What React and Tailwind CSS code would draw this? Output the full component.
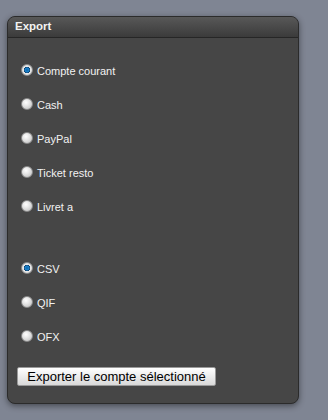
const accounts = ['Compte courant', 'Cash', 'PayPal', 'Ticket resto', 'Livret a']
const formats = ['CSV', 'QIF', 'OFX']

const Radio = ({ checked }) => (
  <span
    className={`block w-[12px] h-[12px] rounded-full shrink-0 border border-[#8a8a8a] ${
      checked
        ? 'bg-[radial-gradient(circle_at_50%_50%,#0b62a8_0%,#1c86cf_28%,#0e3f6c_42%,#e8e8e8_50%,#c9c9c9_100%)]'
        : 'bg-[radial-gradient(circle_at_40%_35%,#ffffff_0%,#e6e6e6_40%,#b8b8b8_100%)]'
    }`}
  />
)

const Option = ({ label, checked }) => (
  <label className="flex items-start h-[34px]">
    <Radio checked={checked} />
    <span className="ml-[4px] mt-[2px] text-[11px] leading-[11px] text-[#f2f2f2]">{label}</span>
  </label>
)

export default function App() {
  return (
    <div className="w-[328px] h-[420px] bg-[#7f8593] pl-[7px] pt-[16px] font-['Liberation_Sans',Arial,sans-serif]">
      <div className="w-[292px] h-[388px] rounded-[8px] bg-[#464646] border border-[#2b2b2b] shadow-[0_2px_6px_rgba(0,0,0,0.45)] overflow-hidden">
        {/* Header */}
        <div className="h-[21px] bg-gradient-to-b from-[#585858] to-[#3b3b3b] border-b border-[#262626] pl-[7px] flex items-center">
          <span className="text-[11.5px] font-bold text-[#f2f2f2]">Export</span>
        </div>

        <div className="pl-[13px] pt-[26px]">
          {accounts.map((a, i) => (
            <Option key={a} label={a} checked={i === 0} />
          ))}
          <div className="h-[28px]" />
          {formats.map((f, i) => (
            <Option key={f} label={f} checked={i === 0} />
          ))}
          <button className="mt-[-3px] ml-[-4px] h-[19px] w-[199px] rounded-[2px] border border-[#9a9a9a] bg-gradient-to-b from-[#ffffff] to-[#d9d9d9] text-[13px] leading-[17px] text-black">
            Exporter le compte sélectionné
          </button>
        </div>
      </div>
    </div>
  )
}
